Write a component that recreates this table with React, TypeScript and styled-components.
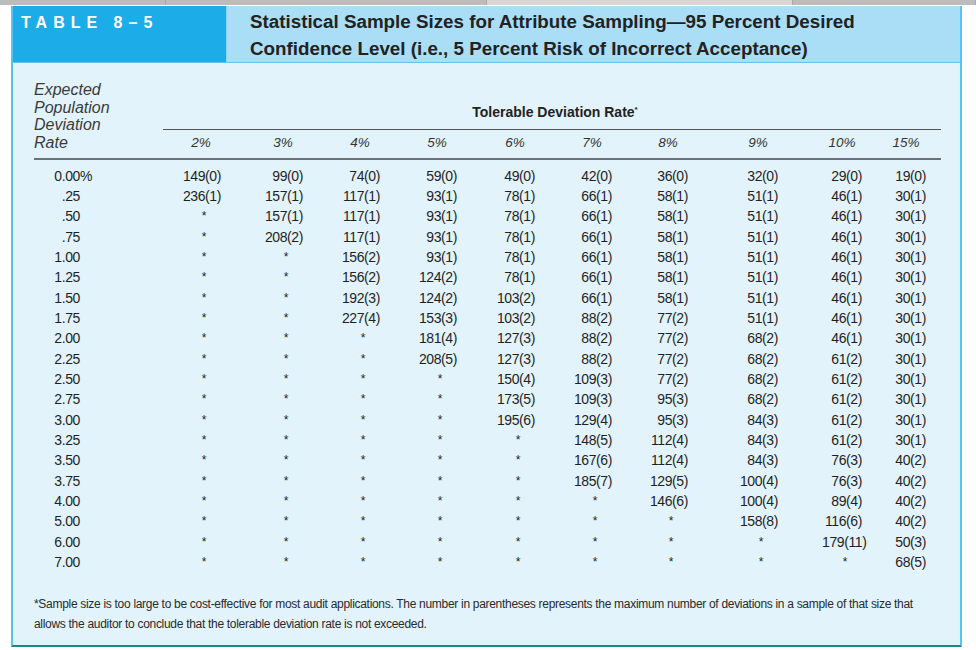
import React from 'react';
import styled, { createGlobalStyle } from 'styled-components';

const GlobalStyle = createGlobalStyle`
  html, body {
    margin: 0;
    padding: 0;
    background: #ffffff;
  }
  body {
    font-family: "Liberation Sans", Arial, sans-serif;
    color: #222;
  }
`;

// label column + 10 rate columns; each rate cell is 40px wide at the start of its track
const COLS = '147px 82px 77px 77px 78px 77px 76px 90px 84px 64px 55px';

const RATES = ['2%', '3%', '4%', '5%', '6%', '7%', '8%', '9%', '10%', '15%'];

type Row = { label: string; pct?: boolean; values: string[] };

const s = '*';
const ROWS: Row[] = [
  { label: '0.00', pct: true, values: ['149(0)', '99(0)', '74(0)', '59(0)', '49(0)', '42(0)', '36(0)', '32(0)', '29(0)', '19(0)'] },
  { label: '.25', values: ['236(1)', '157(1)', '117(1)', '93(1)', '78(1)', '66(1)', '58(1)', '51(1)', '46(1)', '30(1)'] },
  { label: '.50', values: [s, '157(1)', '117(1)', '93(1)', '78(1)', '66(1)', '58(1)', '51(1)', '46(1)', '30(1)'] },
  { label: '.75', values: [s, '208(2)', '117(1)', '93(1)', '78(1)', '66(1)', '58(1)', '51(1)', '46(1)', '30(1)'] },
  { label: '1.00', values: [s, s, '156(2)', '93(1)', '78(1)', '66(1)', '58(1)', '51(1)', '46(1)', '30(1)'] },
  { label: '1.25', values: [s, s, '156(2)', '124(2)', '78(1)', '66(1)', '58(1)', '51(1)', '46(1)', '30(1)'] },
  { label: '1.50', values: [s, s, '192(3)', '124(2)', '103(2)', '66(1)', '58(1)', '51(1)', '46(1)', '30(1)'] },
  { label: '1.75', values: [s, s, '227(4)', '153(3)', '103(2)', '88(2)', '77(2)', '51(1)', '46(1)', '30(1)'] },
  { label: '2.00', values: [s, s, s, '181(4)', '127(3)', '88(2)', '77(2)', '68(2)', '46(1)', '30(1)'] },
  { label: '2.25', values: [s, s, s, '208(5)', '127(3)', '88(2)', '77(2)', '68(2)', '61(2)', '30(1)'] },
  { label: '2.50', values: [s, s, s, s, '150(4)', '109(3)', '77(2)', '68(2)', '61(2)', '30(1)'] },
  { label: '2.75', values: [s, s, s, s, '173(5)', '109(3)', '95(3)', '68(2)', '61(2)', '30(1)'] },
  { label: '3.00', values: [s, s, s, s, '195(6)', '129(4)', '95(3)', '84(3)', '61(2)', '30(1)'] },
  { label: '3.25', values: [s, s, s, s, s, '148(5)', '112(4)', '84(3)', '61(2)', '30(1)'] },
  { label: '3.50', values: [s, s, s, s, s, '167(6)', '112(4)', '84(3)', '76(3)', '40(2)'] },
  { label: '3.75', values: [s, s, s, s, s, '185(7)', '129(5)', '100(4)', '76(3)', '40(2)'] },
  { label: '4.00', values: [s, s, s, s, s, s, '146(6)', '100(4)', '89(4)', '40(2)'] },
  { label: '5.00', values: [s, s, s, s, s, s, s, '158(8)', '116(6)', '40(2)'] },
  { label: '6.00', values: [s, s, s, s, s, s, s, s, '179(11)', '50(3)'] },
  { label: '7.00', values: [s, s, s, s, s, s, s, s, s, '68(5)'] },
];

const TabStrip = styled.div`
  display: flex;
  height: 5px;
`;
const TabSegment = styled.div<{ $w?: number; $light?: boolean }>`
  flex: ${(p) => (p.$w ? `0 0 ${p.$w}px` : '1')};
  background: ${(p) => (p.$light ? '#d6d6d6' : '#bcbcbc')};
  border-right: 1px solid #a9a9a9;
`;

const Panel = styled.div`
  margin: 1px 0 0 11px;
  width: 947px;
  border-left: 2px solid #55c5ef;
  border-right: 2px solid #55c5ef;
  border-bottom: 2px solid #1b8781;
  background: #e2f3fc;
`;

const Header = styled.div`
  display: flex;
  height: 56px;
  border-bottom: 1px solid #62c4ec;
`;
const TableTag = styled.div`
  flex: 0 0 205px;
  background: #1cade8;
  color: #fff;
  padding: 9px 0 0 8px;
  font-size: 16px;
  line-height: 16px;
  font-weight: 700;
  letter-spacing: 6px;
  border-right: 1px solid #8fd5f4;
`;
const Title = styled.div`
  flex: 1;
  background: #aadef6;
  padding: 3px 0 0 23px;
  font-size: 18.8px;
  line-height: 26.5px;
  font-weight: 700;
  color: #222;
`;

const Body = styled.div`
  padding: 18px 19px 11px 21px;
`;

const HeadGrid = styled.div`
  display: grid;
  grid-template-columns: ${COLS};
  grid-template-rows: 52.5px 17.5px;
`;
const StubHead = styled.div`
  grid-row: 1 / 3;
  grid-column: 1;
  font-size: 16px;
  line-height: 17.5px;
  font-style: italic;
  color: #3a3a3a;
`;
const SpanHead = styled.div`
  grid-row: 1;
  grid-column: 2 / -1;
  align-self: end;
  margin: 0 0 4px -18px;
  padding: 0 0 9px 6px;
  border-bottom: 1.5px solid #555;
  text-align: center;
  font-size: 14px;
  line-height: 16px;
  font-weight: 700;
  color: #222;
  sup {
    font-size: 8px;
    vertical-align: 5px;
  }
`;
const RateHead = styled.div`
  grid-row: 2;
  width: 40px;
  text-align: center;
  font-size: 13.5px;
  line-height: 17.5px;
  font-style: italic;
  color: #333;
`;

const Rule = styled.div`
  margin-top: 6.5px;
  height: 2px;
  background: #6b7176;
`;

const Rows = styled.div`
  margin-top: 6px;
`;
const DataRow = styled.div`
  display: grid;
  grid-template-columns: ${COLS};
  height: 20.33px;
  align-items: center;
  font-size: 14px;
  letter-spacing: -0.4px;
  color: #1f1f1f;
`;
const Stub = styled.div`
  padding-left: 20px;
  white-space: nowrap;
`;
const StubNum = styled.span`
  display: inline-block;
  width: 26px;
  text-align: right;
`;
const Cell = styled.div<{ $star?: boolean }>`
  width: 40px;
  text-align: ${(p) => (p.$star ? 'center' : 'right')};
  white-space: nowrap;
  ${(p) => p.$star && 'font-size: 12px; padding-left: 3px;'}
`;

const Footnote = styled.p`
  margin: 22px 0 0;
  font-size: 12px;
  letter-spacing: -0.3px;
  line-height: 20px;
  color: #2a2a2a;
  white-space: nowrap;
`;

export default function App() {
  return (
    <>
      <GlobalStyle />
      <TabStrip>
        <TabSegment $w={165} />
        <TabSegment $w={320} />
        <TabSegment $w={305} $light />
        <TabSegment />
      </TabStrip>
      <Panel>
        <Header>
          <TableTag>TABLE 8–5</TableTag>
          <Title>
            Statistical Sample Sizes for Attribute Sampling—95 Percent Desired
            <br />
            Confidence Level (i.e., 5 Percent Risk of Incorrect Acceptance)
          </Title>
        </Header>
        <Body>
          <HeadGrid>
            <StubHead>
              Expected
              <br />
              Population
              <br />
              Deviation
              <br />
              Rate
            </StubHead>
            <SpanHead>
              Tolerable Deviation Rate<sup>*</sup>
            </SpanHead>
            {RATES.map((r, i) => (
              <RateHead key={r} style={{ gridColumn: i + 2 }}>
                {r}
              </RateHead>
            ))}
          </HeadGrid>
          <Rule />
          <Rows>
            {ROWS.map((row) => (
              <DataRow key={row.label}>
                <Stub>
                  <StubNum>{row.label}</StubNum>
                  {row.pct && '%'}
                </Stub>
                {row.values.map((v, i) => (
                  <Cell key={i} $star={v === s}>
                    {v}
                  </Cell>
                ))}
              </DataRow>
            ))}
          </Rows>
          <Footnote>
            *Sample size is too large to be cost-effective for most audit applications. The number in
            parentheses represents the maximum number of deviations in a sample of that size that
            <br />
            allows the auditor to conclude that the tolerable deviation rate is not exceeded.
          </Footnote>
        </Body>
      </Panel>
    </>
  );
}
